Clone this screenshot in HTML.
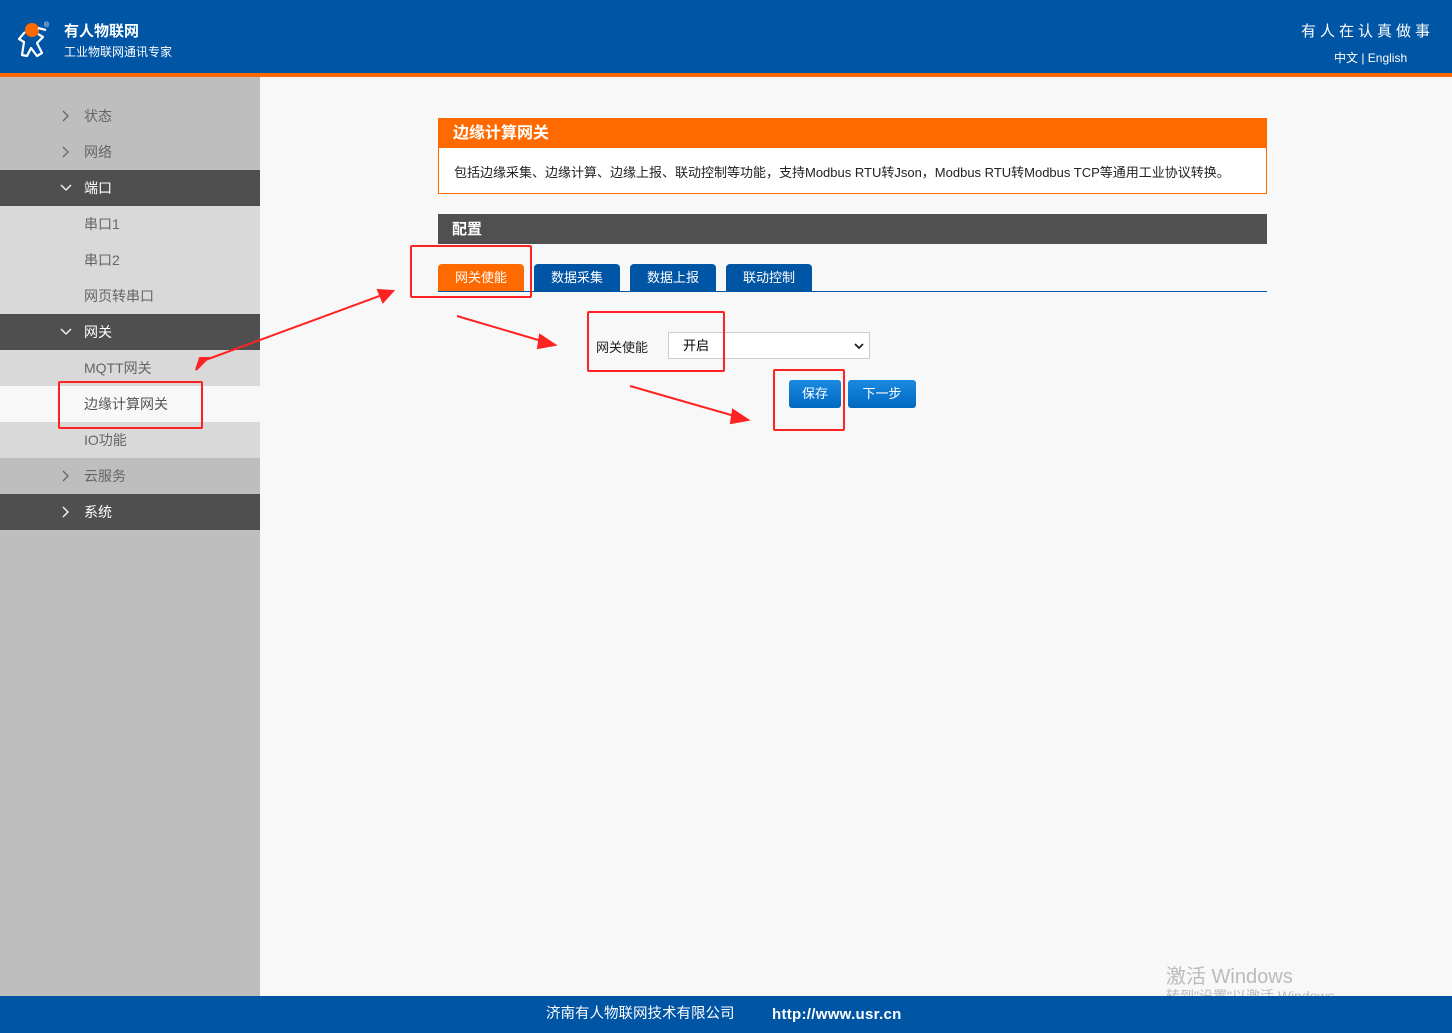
<!DOCTYPE html><html><head><meta charset="utf-8"><style>
*{margin:0;padding:0;box-sizing:border-box}
body{width:1452px;height:1033px;overflow:hidden;background:#f8f8f8;font-family:"Liberation Sans","Noto Sans CJK SC",sans-serif;position:relative;font-size:14px}
.hd{position:absolute;left:0;top:0;width:1452px;height:73px;background:#0055a5}
.ob{position:absolute;left:0;top:73px;width:1452px;height:4px;background:#ff6a00}
.sb{position:absolute;left:0;top:77px;width:260px;height:919px;background:#bebebe}
.it{position:absolute;left:0;width:260px;height:36px;line-height:36px;padding-left:84px;color:#666;font-size:14px}
.it.d{background:#4f4f4f;color:#fff}.it.l{background:#d9d9d9}.it.a{background:#f8f8f8;color:#555}
.ch{position:absolute;left:60px;top:12px}
.ft{position:absolute;left:0;top:996px;width:1452px;height:37px;background:#0055a5;color:#fff;font-size:14px;line-height:37px}
.rb{position:absolute;border:2px solid #f22;border-radius:2px}
.tab{position:absolute;top:264px;height:28px;width:86px;color:#fff;text-align:center;line-height:28px;font-size:13px;border-radius:4px 4px 0 0;background:#0055a5}
.btn{position:absolute;top:380px;height:28px;color:#fff;text-align:center;line-height:28px;font-size:13px;border-radius:3px;background:linear-gradient(#1a8ae0,#0068c0)}
</style></head><body>
<div class="hd">
<svg style="position:absolute;left:16px;top:19px" width="38" height="40" viewBox="0 0 38 40"><circle cx="16" cy="11" r="7" fill="#ff6a00"/><path d="M9 13 L3 20 L8 23 L6 36 L11 37 L15 29 L21 37 L26 34 L21 24 L27 18 L22 15 M22 9 L30 11" fill="none" stroke="#fff" stroke-width="2.2" stroke-linejoin="round"/><text x="28" y="8" font-size="7" fill="#fff">®</text></svg>
<div style="position:absolute;left:64px;top:20px;color:#fff;font-weight:bold;font-size:15px">有人物联网</div>
<div style="position:absolute;left:64px;top:43px;color:#fff;font-size:12px">工业物联网通讯专家</div>
<div style="position:absolute;right:18px;top:20px;color:#fff;font-size:15px;letter-spacing:4px">有人在认真做事</div>
<div style="position:absolute;left:1334px;top:49px;color:#fff;font-size:12px">中文 | English</div>
</div>
<div class="ob"></div>
<div class="sb"></div>
<div class="it" style="top:98px"><svg class="ch" width="12" height="12"><polyline points="3,1 8,6 3,11" fill="none" stroke="#666" stroke-width="1.3"/></svg>状态</div>
<div class="it" style="top:134px"><svg class="ch" width="12" height="12"><polyline points="3,1 8,6 3,11" fill="none" stroke="#666" stroke-width="1.3"/></svg>网络</div>
<div class="it d" style="top:170px"><svg class="ch" width="12" height="12"><polyline points="1,3 6,8 11,3" fill="none" stroke="#fff" stroke-width="1.3"/></svg>端口</div>
<div class="it l" style="top:206px">串口1</div>
<div class="it l" style="top:242px">串口2</div>
<div class="it l" style="top:278px">网页转串口</div>
<div class="it d" style="top:314px"><svg class="ch" width="12" height="12"><polyline points="1,3 6,8 11,3" fill="none" stroke="#fff" stroke-width="1.3"/></svg>网关</div>
<div class="it l" style="top:350px">MQTT网关</div>
<div class="it a" style="top:386px">边缘计算网关</div>
<div class="it l" style="top:422px">IO功能</div>
<div class="it" style="top:458px"><svg class="ch" width="12" height="12"><polyline points="3,1 8,6 3,11" fill="none" stroke="#666" stroke-width="1.3"/></svg>云服务</div>
<div class="it d" style="top:494px"><svg class="ch" width="12" height="12"><polyline points="3,1 8,6 3,11" fill="none" stroke="#fff" stroke-width="1.3"/></svg>系统</div>
<div style="position:absolute;left:438px;top:118px;width:829px;height:76px;border:1px solid #ff6a00;background:#fff">
<div style="height:29px;background:#ff6a00;color:#fff;font-weight:bold;font-size:16px;line-height:29px;padding-left:14px">边缘计算网关</div>
<div style="padding:14px 0 0 15px;font-size:13px;color:#222">包括边缘采集、边缘计算、边缘上报、联动控制等功能，支持Modbus RTU转Json，Modbus RTU转Modbus TCP等通用工业协议转换。</div></div>
<div style="position:absolute;left:438px;top:214px;width:829px;height:30px;background:#505050;color:#fff;font-size:15px;line-height:32px;padding-left:14px;font-weight:bold">配置</div>
<div class="tab" style="left:438px;background:#ff6a00">网关使能</div>
<div class="tab" style="left:534px">数据采集</div>
<div class="tab" style="left:630px">数据上报</div>
<div class="tab" style="left:726px">联动控制</div>
<div style="position:absolute;left:438px;top:291px;width:829px;height:1px;background:#0055a5"></div>
<div style="position:absolute;left:596px;top:337px;font-size:13px;color:#222">网关使能</div>
<div style="position:absolute;left:668px;top:332px;width:202px;height:27px;border:1px solid #ccc;background:#fff;font-size:13px;line-height:25px;padding-left:14px">开启<svg style="position:absolute;right:5px;top:9px" width="10" height="8"><polyline points="1,2 5,6 9,2" fill="none" stroke="#222" stroke-width="1.8"/></svg></div>
<div class="btn" style="left:789px;width:52px">保存</div>
<div class="btn" style="left:848px;width:68px">下一步</div>
<div class="rb" style="left:410px;top:245px;width:122px;height:53px"></div>
<div class="rb" style="left:587px;top:311px;width:138px;height:61px"></div>
<div class="rb" style="left:773px;top:369px;width:72px;height:62px"></div>
<div class="rb" style="left:58px;top:381px;width:145px;height:48px"></div>
<svg style="position:absolute;left:0;top:0" width="1452" height="1033"><g stroke="#f22" stroke-width="2" fill="#f22">
<line x1="200" y1="362" x2="385" y2="294"/><polygon points="393,291 378,290 383,302"/><polygon points="196,370 208,358 200,358"/>
<line x1="457" y1="316" x2="545" y2="342"/><polygon points="555,345 540,335 538,348"/>
<line x1="630" y1="386" x2="738" y2="417"/><polygon points="748,420 733,410 731,423"/></g></svg>
<div style="position:absolute;left:1166px;top:960px;color:#bbb;font-size:20px">激活 Windows</div>
<div style="position:absolute;left:1166px;top:986px;color:#bbb;font-size:14px">转到"设置"以激活 Windows。</div>
<div class="ft"><span style="position:absolute;left:546px;font-size:14.5px">济南有人物联网技术有限公司</span><span style="position:absolute;left:772px;font-size:15px;font-weight:bold;letter-spacing:0.3px">http://www.usr.cn</span></div>
</body></html>
